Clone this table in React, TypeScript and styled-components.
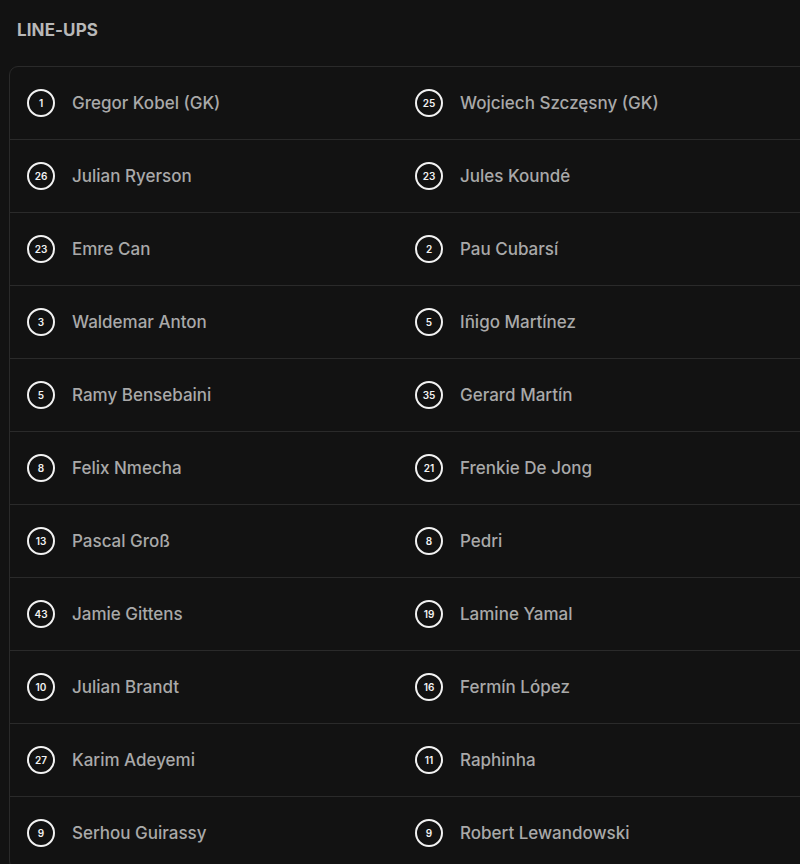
import React from "react";
import styled, { createGlobalStyle } from "styled-components";

const GlobalStyle = createGlobalStyle`
  html, body {
    margin: 0;
    padding: 0;
    background: #121212;
  }
  body {
    font-family: Inter, "Noto Sans", "Liberation Sans", sans-serif;
    -webkit-font-smoothing: antialiased;
  }
`;

const Page = styled.div`
  width: 800px;
  min-height: 864px;
  background: #121212;
  overflow: hidden;
  padding-top: 20px;
  box-sizing: border-box;
`;

const Title = styled.h2`
  margin: 0 0 0 17px;
  height: 20px;
  line-height: 20px;
  font-size: 17px;
  font-weight: 700;
  color: #b8b8b8;
  letter-spacing: 0.1px;
`;

const Card = styled.div`
  margin: 26px 0 0 9px;
  width: 800px;
  border: 1px solid #2a2a2a;
  border-radius: 9px;
  background: #121212;
`;

const Row = styled.div<{ $last?: boolean }>`
  display: grid;
  grid-template-columns: 388px 1fr;
  height: 72px;
  border-bottom: ${(p) => (p.$last ? "none" : "1px solid #2a2a2a")};
`;

const Player = styled.div`
  display: flex;
  align-items: center;
  padding-left: 17px;
  gap: 17px;
`;

const Number = styled.span`
  box-sizing: border-box;
  width: 28px;
  height: 28px;
  flex: 0 0 28px;
  border: 2px solid #f2f2f2;
  border-radius: 50%;
  display: flex;
  align-items: center;
  justify-content: center;
  font-size: 10px;
  font-weight: 600;
  color: #f2f2f2;
`;

const Name = styled.span`
  font-size: 17px;
  font-weight: 500;
  color: #a9a9a9;
  white-space: nowrap;
  margin-top: -1px;
`;

type P = [number, string];

const lineups: [P, P][] = [
  [[1, "Gregor Kobel (GK)"], [25, "Wojciech Szczęsny (GK)"]],
  [[26, "Julian Ryerson"], [23, "Jules Koundé"]],
  [[23, "Emre Can"], [2, "Pau Cubarsí"]],
  [[3, "Waldemar Anton"], [5, "Iñigo Martínez"]],
  [[5, "Ramy Bensebaini"], [35, "Gerard Martín"]],
  [[8, "Felix Nmecha"], [21, "Frenkie De Jong"]],
  [[13, "Pascal Groß"], [8, "Pedri"]],
  [[43, "Jamie Gittens"], [19, "Lamine Yamal"]],
  [[10, "Julian Brandt"], [16, "Fermín López"]],
  [[27, "Karim Adeyemi"], [11, "Raphinha"]],
  [[9, "Serhou Guirassy"], [9, "Robert Lewandowski"]],
];

const PlayerCell = ({ p }: { p: P }) => (
  <Player>
    <Number>{p[0]}</Number>
    <Name>{p[1]}</Name>
  </Player>
);

export default function App() {
  return (
    <>
      <GlobalStyle />
      <Page>
        <Title>LINE-UPS</Title>
        <Card>
          {lineups.map((pair, i) => (
            <Row key={i} $last={i === lineups.length - 1}>
              <PlayerCell p={pair[0]} />
              <PlayerCell p={pair[1]} />
            </Row>
          ))}
        </Card>
      </Page>
    </>
  );
}
